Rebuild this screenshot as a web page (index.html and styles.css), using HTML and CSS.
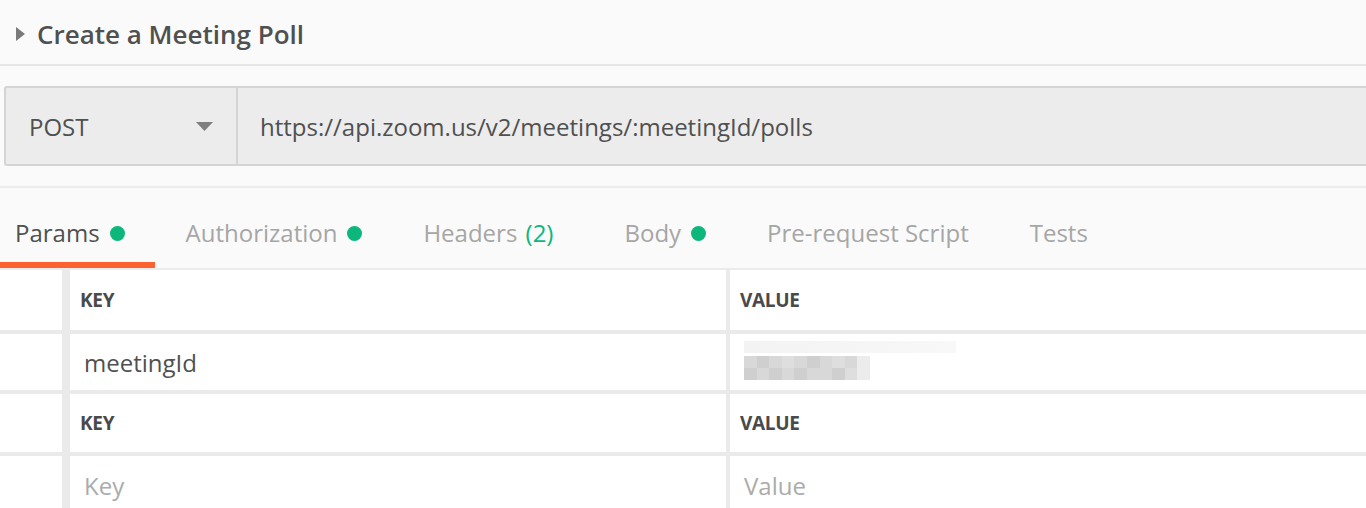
FILE: index.html
```html
<!DOCTYPE html>
<html>
<head>
<meta charset="utf-8">
<link rel="stylesheet" href="styles.css">
</head>
<body>
<div class="page">
  <header class="title-bar">
    <svg class="caret" width="9" height="14" viewBox="0 0 9 14"><path d="M0 0 L9 7 L0 14 Z" fill="#7a7a7a"/></svg>
    <h1 class="title">Create a Meeting Poll</h1>
  </header>

  <section class="request">
    <div class="url-bar">
      <div class="method">
        <span class="method-name">POST</span>
        <svg class="arrow" width="17" height="9" viewBox="0 0 17 9"><path d="M0 0 L17 0 L8.5 9 Z" fill="#7f7f7f"/></svg>
      </div>
      <div class="url">https://api.zoom.us/v2/meetings/:meetingId/polls</div>
    </div>
  </section>

  <nav class="tabs">
    <div class="tab active">Params<span class="dot"></span></div>
    <div class="tab">Authorization<span class="dot"></span></div>
    <div class="tab">Headers <span class="count">(2)</span></div>
    <div class="tab">Body<span class="dot"></span></div>
    <div class="tab">Pre-request Script</div>
    <div class="tab">Tests</div>
  </nav>

  <div class="table">
    <div class="row head h1">
      <div class="cell lead"></div>
      <div class="cell key">KEY</div>
      <div class="cell val">VALUE</div>
    </div>
    <div class="row data r1">
      <div class="cell lead"></div>
      <div class="cell key input">meetingId</div>
      <div class="cell val input">
        <div class="blur">
          <div class="blur-top"></div>
          <div class="mosaic">
            <i class="m2"></i><i class="m1"></i><i class="m2"></i><i class="m3"></i><i class="m2"></i><i class="m1"></i><i class="m2"></i><i class="m3"></i><i class="m2"></i><i class="m4"></i>
            <i class="m1"></i><i class="m2"></i><i class="m1"></i><i class="m2"></i><i class="m1"></i><i class="m2"></i><i class="m2"></i><i class="m1"></i><i class="m3"></i><i class="m4"></i>
          </div>
        </div>
      </div>
    </div>
    <div class="row head h2">
      <div class="cell lead"></div>
      <div class="cell key">KEY</div>
      <div class="cell val">VALUE</div>
    </div>
    <div class="row data r2">
      <div class="cell lead"></div>
      <div class="cell key input placeholder">Key</div>
      <div class="cell val input placeholder">Value</div>
    </div>
  </div>
</div>
</body>
</html>
```

FILE: styles.css
```css
* { box-sizing: border-box; }
html, body { margin: 0; padding: 0; }
body {
  background: #fafafa;
  font-family: "Open Sans", "Liberation Sans", sans-serif;
  color: #505050;
  width: 1366px;
  height: 508px;
  overflow: hidden;
}

.title-bar {
  height: 66px;
  display: flex;
  align-items: center;
  padding-left: 16px;
  padding-top: 4px;
  border-bottom: 2px solid #e6e6e6;
}
.caret { flex: none; margin-right: 12px; margin-top: 0; }
.title {
  margin: 0;
  font-size: 26px;
  font-weight: 600;
  color: #505050;
  line-height: 1;
}

.request {
  padding: 20px 0 20px 4px;
  border-bottom: 2px solid #ebebeb;
}
.url-bar {
  display: flex;
  height: 80px;
  background: #ececec;
  border: 2px solid #d4d4d4;
  border-right: none;
  border-radius: 3px 0 0 3px;
}
.method {
  width: 232px;
  flex: none;
  display: flex;
  align-items: center;
  justify-content: space-between;
  padding: 0 23px 0 23px;
  border-right: 2px solid #d4d4d4;
}
.method-name { font-size: 24px; color: #505050; }
.arrow { margin-top: 1px; }
.url {
  display: flex;
  align-items: center;
  padding-left: 22px;
  font-size: 24px;
  color: #505050;
}

.tabs {
  display: flex;
  gap: 16px;
  height: 82px;
  border-bottom: 2px solid #ebebeb;
}
.tab {
  display: flex;
  align-items: center;
  height: 80px;
  padding: 27px 30px 11px 15px;
  border-bottom: 6px solid transparent;
  font-size: 24px;
  line-height: 36px;
  color: #a6a6a6;
  white-space: pre;
}
.tab.active {
  color: #505050;
  border-bottom-color: #fb6230;
}
.dot {
  width: 15px;
  height: 15px;
  border-radius: 50%;
  background: #0cb77c;
  margin-left: 10px;
  flex: none;
}
.count { color: #0cb77c; margin-left: 2px; margin-right: 10px; }

.table {
  background: #fff;
}
.row {
  display: flex;
  border-bottom: 4px solid #eaeaea;
}
.h1 { height: 64px; }
.r1 { height: 60px; }
.h2 { height: 62px; }
.r2 { height: 58px; border-bottom: none; }
.cell {
  display: flex;
  align-items: center;
}
.lead { width: 62px; flex: none; }
.key {
  width: 664px;
  flex: none;
  border-left: 8px solid #eaeaea;
  padding-left: 10px;
}
.val {
  flex: 1;
  border-left: 4px solid #eaeaea;
  padding-left: 10px;
}
.head .cell {
  font-size: 19px;
  font-weight: 700;
  color: #4a4a4a;
  letter-spacing: -0.3px;
}
.input {
  padding-left: 14px;
  font-size: 24px;
  color: #505050;
}
.placeholder { color: #ababab; }

.blur {
  display: flex;
  flex-direction: column;
  gap: 3px;
  margin-top: -4px;
}
.blur-top {
  width: 212px;
  height: 12px;
  background: linear-gradient(90deg, #f3f3f3, #f6f6f6 60%, #f8f8f8);
}
.mosaic {
  display: grid;
  grid-template-columns: repeat(10, 12.6px);
  grid-auto-rows: 12px;
  width: 126px;
}
.mosaic i { display: block; }
.m1 { background: #cfcfcf; }
.m2 { background: #d8d8d8; }
.m3 { background: #dedede; }
.m4 { background: #ececec; }
```
